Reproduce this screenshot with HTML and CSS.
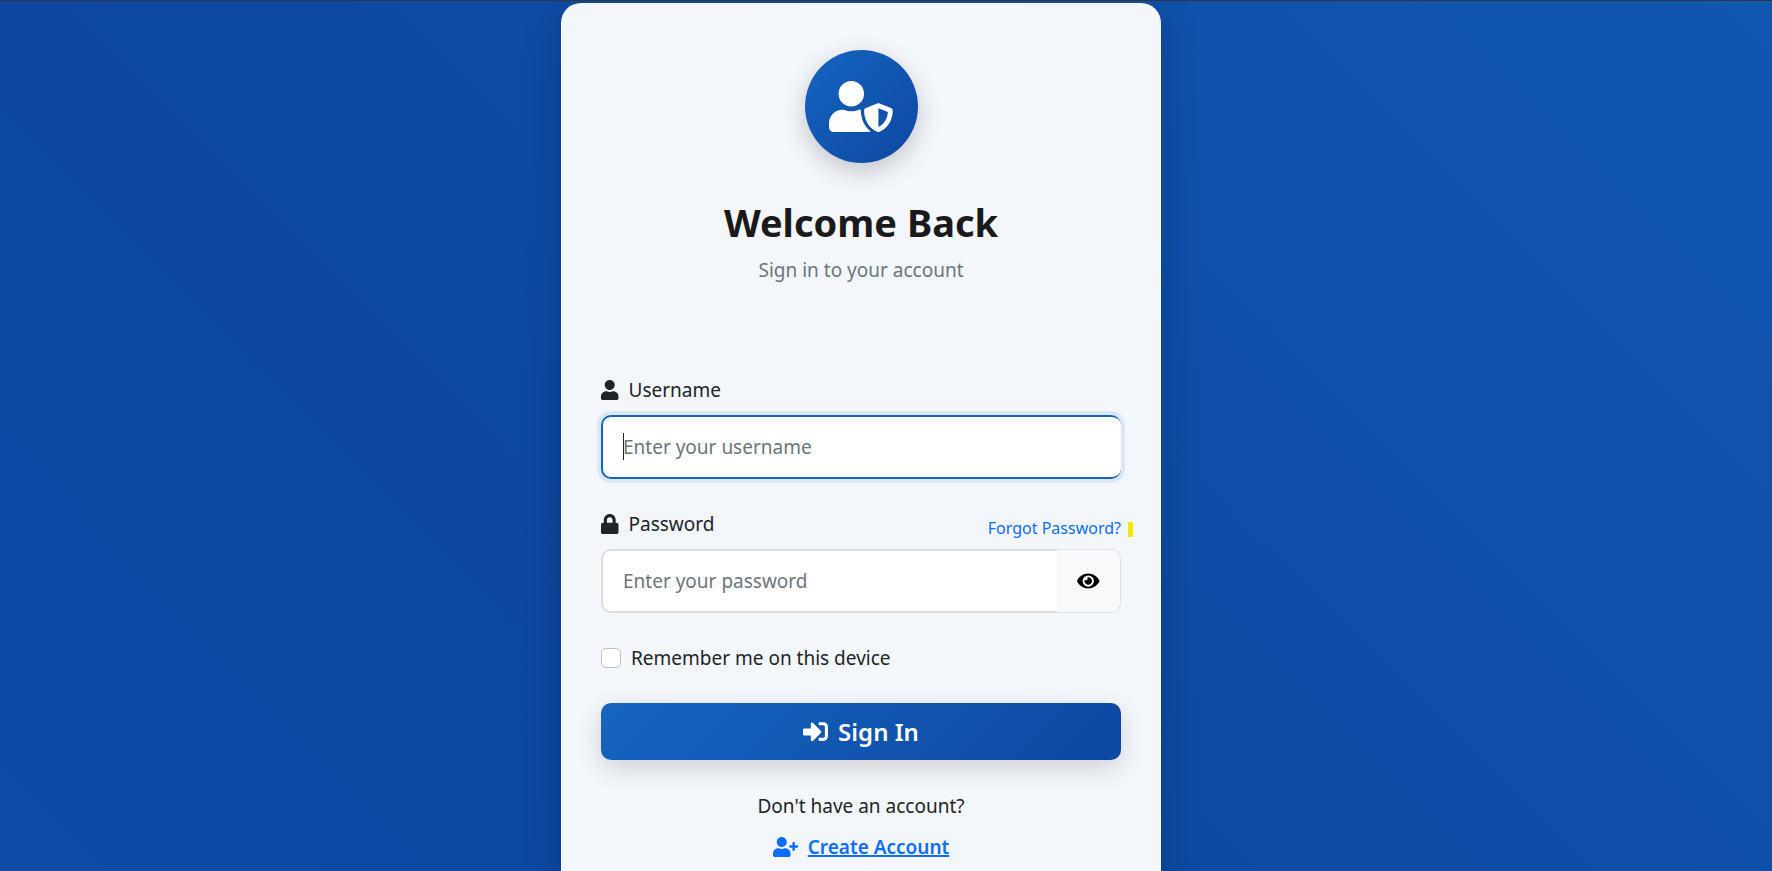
FILE: index.html
```html
<!DOCTYPE html>
<html lang="en">
<head>
<meta charset="utf-8">
<title>Sign In</title>
<link rel="stylesheet" href="styles.css">
</head>
<body>
<main class="page">
  <section class="card">
    <header class="card-header">
      <div class="logo">
        <svg class="logo-icon" viewBox="0 0 640 512" aria-hidden="true"><path d="M622.3 271.1l-115.2-45c-4.1-1.6-12.6-3.7-22.2 0l-115.2 45c-10.7 4.2-17.7 14-17.7 24.9 0 111.6 68.7 188.8 132.9 213.9 9.6 3.7 18 1.6 22.2 0C558.4 489.9 640 420.5 640 296c0-10.9-7-20.7-17.7-24.9zM496 462.4V273.3l95.5 37.3c-5.6 87.1-60.9 135.4-95.5 151.8zM224 256c70.7 0 128-57.3 128-128S294.7 0 224 0 96 57.3 96 128s57.3 128 128 128zm96 40c0-2.5.8-4.8 1.1-7.2-2.5-.1-4.9-.8-7.5-.8h-16.7c-22.2 10.2-46.9 16-72.9 16s-50.6-5.8-72.9-16h-16.7C60.2 288 0 348.2 0 422.4V464c0 26.5 21.5 48 48 48h352c6.8 0 13.3-1.5 19.2-4-54-42.9-99.2-116.7-99.2-212z"/></svg>
      </div>
      <h1 class="title">Welcome Back</h1>
      <p class="subtitle">Sign in to your account</p>
    </header>
    <form class="form">
      <div class="field">
        <label class="label" for="username">
          <svg class="icon" viewBox="0 0 448 512" aria-hidden="true"><path d="M224 256c70.7 0 128-57.3 128-128S294.7 0 224 0 96 57.3 96 128s57.3 128 128 128zm89.6 32h-16.7c-22.2 10.2-46.9 16-72.9 16s-50.6-5.8-72.9-16h-16.7C60.2 288 0 348.2 0 422.4V464c0 26.5 21.5 48 48 48h352c26.5 0 48-21.5 48-48v-41.6c0-74.2-60.2-134.4-134.4-134.4z"/></svg>
          <span>Username</span>
        </label>
        <div class="input-group">
          <input class="input input-active" id="username" type="text" placeholder="Enter your username">
          <span class="caret"></span>
        </div>
      </div>
      <div class="field">
        <div class="label-row">
          <label class="label" for="password">
            <svg class="icon" viewBox="0 0 448 512" aria-hidden="true"><path d="M400 224h-24v-72C376 68.2 307.8 0 224 0S72 68.2 72 152v72H48c-26.5 0-48 21.5-48 48v192c0 26.5 21.5 48 48 48h352c26.5 0 48-21.5 48-48V272c0-26.5-21.5-48-48-48zm-104 0H152v-72c0-39.7 32.3-72 72-72s72 32.3 72 72v72z"/></svg>
            <span>Password</span>
          </label>
          <a class="forgot" href="#">Forgot Password?<span class="marker"></span></a>
        </div>
        <div class="input-group">
          <input class="input input-joined" id="password" type="password" placeholder="Enter your password">
          <button class="toggle" type="button" aria-label="Show password">
            <svg class="icon" viewBox="0 0 576 512" aria-hidden="true"><path d="M572.52 241.4C518.29 135.59 410.93 64 288 64S57.68 135.64 3.48 241.41a32.35 32.35 0 0 0 0 29.19C57.71 376.41 165.07 448 288 448s230.32-71.64 284.52-177.41a32.35 32.35 0 0 0 0-29.19zM288 400a144 144 0 1 1 144-144 143.93 143.93 0 0 1-144 144zm0-240a95.31 95.31 0 0 0-25.31 3.79 47.85 47.85 0 0 1-66.9 66.9A95.78 95.78 0 1 0 288 160z"/></svg>
          </button>
        </div>
      </div>
      <div class="remember">
        <input class="check" id="remember" type="checkbox">
        <label for="remember">Remember me on this device</label>
      </div>
      <button class="submit" type="submit">
        <svg class="icon" viewBox="0 0 512 512" aria-hidden="true"><path d="M416 448h-84c-6.6 0-12-5.4-12-12v-40c0-6.6 5.4-12 12-12h84c17.7 0 32-14.3 32-32V160c0-17.7-14.3-32-32-32h-84c-6.6 0-12-5.4-12-12V76c0-6.6 5.4-12 12-12h84c53 0 96 43 96 96v192c0 53-43 96-96 96zm-47-201L201 79c-15-15-41-4.5-41 17v96H24c-13.3 0-24 10.7-24 24v96c0 13.3 10.7 24 24 24h136v96c0 21.5 26 32 41 17l168-168c9.3-9.4 9.3-24.6 0-34z"/></svg>
        <span>Sign In</span>
      </button>
    </form>
    <footer class="card-footer">
      <p class="question">Don't have an account?</p>
      <a class="create" href="#">
        <svg class="icon" viewBox="0 0 640 512" aria-hidden="true"><path d="M624 208h-64v-64c0-8.8-7.2-16-16-16h-32c-8.8 0-16 7.2-16 16v64h-64c-8.8 0-16 7.2-16 16v32c0 8.8 7.2 16 16 16h64v64c0 8.8 7.2 16 16 16h32c8.8 0 16-7.2 16-16v-64h64c8.8 0 16-7.2 16-16v-32c0-8.8-7.2-16-16-16zm-400 48c70.7 0 128-57.3 128-128S294.7 0 224 0 96 57.3 96 128s57.3 128 128 128zm89.6 32h-16.7c-22.2 10.2-46.9 16-72.9 16s-50.6-5.8-72.9-16h-16.7C60.2 288 0 348.2 0 422.4V464c0 26.5 21.5 48 48 48h352c26.5 0 48-21.5 48-48v-41.6c0-74.2-60.2-134.4-134.4-134.4z"/></svg>
        <span class="create-text">Create Account</span>
      </a>
    </footer>
  </section>
</main>
</body>
</html>
```
FILE: styles.css
```css
* { box-sizing: border-box; }

body {
  margin: 0;
  color: #212529;
  font-family: "Segoe UI", "Noto Sans", "Open Sans", sans-serif;
  font-size: 19px;
  line-height: 30px;
}

h1, p { margin: 0; }

.page {
  display: flex;
  justify-content: center;
  align-items: flex-start;
  height: 100vh;
  padding: 2px 50px 0 0;
  overflow: hidden;
  border-top: 1px solid #33343c;
  background: linear-gradient(45deg, #0d4ba6 0%, #0d47a1 33%, #1057b1 100%);
}

.card {
  width: 100%;
  max-width: 600px;
  padding: 47px 40px 40px;
  border-radius: 20px;
  background: #f3f6fb;
  box-shadow: 0 10px 40px rgba(0, 0, 0, 0.2);
}

.card-header {
  display: flex;
  flex-direction: column;
  align-items: center;
  margin-bottom: 90px;
}

.logo {
  display: flex;
  align-items: center;
  justify-content: center;
  width: 113px;
  height: 113px;
  margin-bottom: 34px;
  border-radius: 50%;
  background: linear-gradient(135deg, #1565c0, #0d47a1);
  box-shadow: 0 8px 24px rgba(0, 0, 0, 0.2);
}

.logo-icon { height: 51px; fill: #fff; }

.title {
  color: #1a1a1a;
  font-size: 38px;
  font-weight: 700;
  line-height: 50px;
  margin-bottom: 8px;
}

.subtitle { color: #6c757d; }

.icon { display: block; height: 20px; fill: currentColor; }

.field { margin-bottom: 30px; }

.label {
  display: flex;
  align-items: center;
  gap: 10px;
  margin-bottom: 10px;
}

.label-row {
  display: flex;
  justify-content: space-between;
  align-items: flex-start;
}

.forgot {
  position: relative;
  padding-top: 4px;
  color: #0d6efd;
  font-size: 16px;
  text-decoration: none;
}

.marker {
  position: absolute;
  top: 13px;
  left: calc(100% + 7px);
  width: 5px;
  height: 15px;
  background: #f5e800;
}

.input-group { position: relative; display: flex; }

.input {
  flex: 1;
  min-width: 0;
  height: 64px;
  padding: 0 20px;
  border: 2px solid #dedede;
  border-radius: 10px;
  outline: none;
  background: #fff;
  color: #212529;
  font: inherit;
}

.input::placeholder { color: #6c757d; opacity: 1; }

.input-active {
  border-color: #1565c0;
  border-right-width: 0;
  box-shadow: 0 0 0 4px #dce7f5;
}

.input-joined { border-right: 0; border-radius: 10px 0 0 10px; }

.caret {
  position: absolute;
  top: 18px;
  left: 22px;
  width: 1px;
  height: 27px;
  background: #212529;
}

.toggle {
  display: flex;
  align-items: center;
  justify-content: center;
  width: 64px;
  border: 1px solid #dee2e6;
  border-left: 0;
  border-radius: 0 10px 10px 0;
  background: #f8f9fa;
  color: #000;
}

.remember {
  display: flex;
  align-items: center;
  gap: 10px;
  margin-bottom: 30px;
}

.check {
  appearance: none;
  width: 20px;
  height: 20px;
  margin: 0;
  border: 1px solid #bfbfbf;
  border-radius: 5px;
  background: #fff;
}

.submit {
  display: flex;
  align-items: center;
  justify-content: center;
  gap: 10px;
  width: 100%;
  height: 57px;
  border: 0;
  border-radius: 10px;
  background: linear-gradient(135deg, #1565c0, #0d47a1);
  box-shadow: 0 8px 24px rgba(0, 0, 0, 0.15);
  color: #fff;
  font: inherit;
  font-size: 24px;
  font-weight: 600;
}

.submit .icon { height: 25px; }

.card-footer {
  display: flex;
  flex-direction: column;
  align-items: center;
  gap: 11px;
  margin-top: 31px;
}

.create {
  display: flex;
  align-items: center;
  gap: 10px;
  color: #0d6efd;
  font-weight: 600;
  text-decoration: none;
}

.create-text { text-decoration: underline; text-decoration-thickness: 2px; }
```
